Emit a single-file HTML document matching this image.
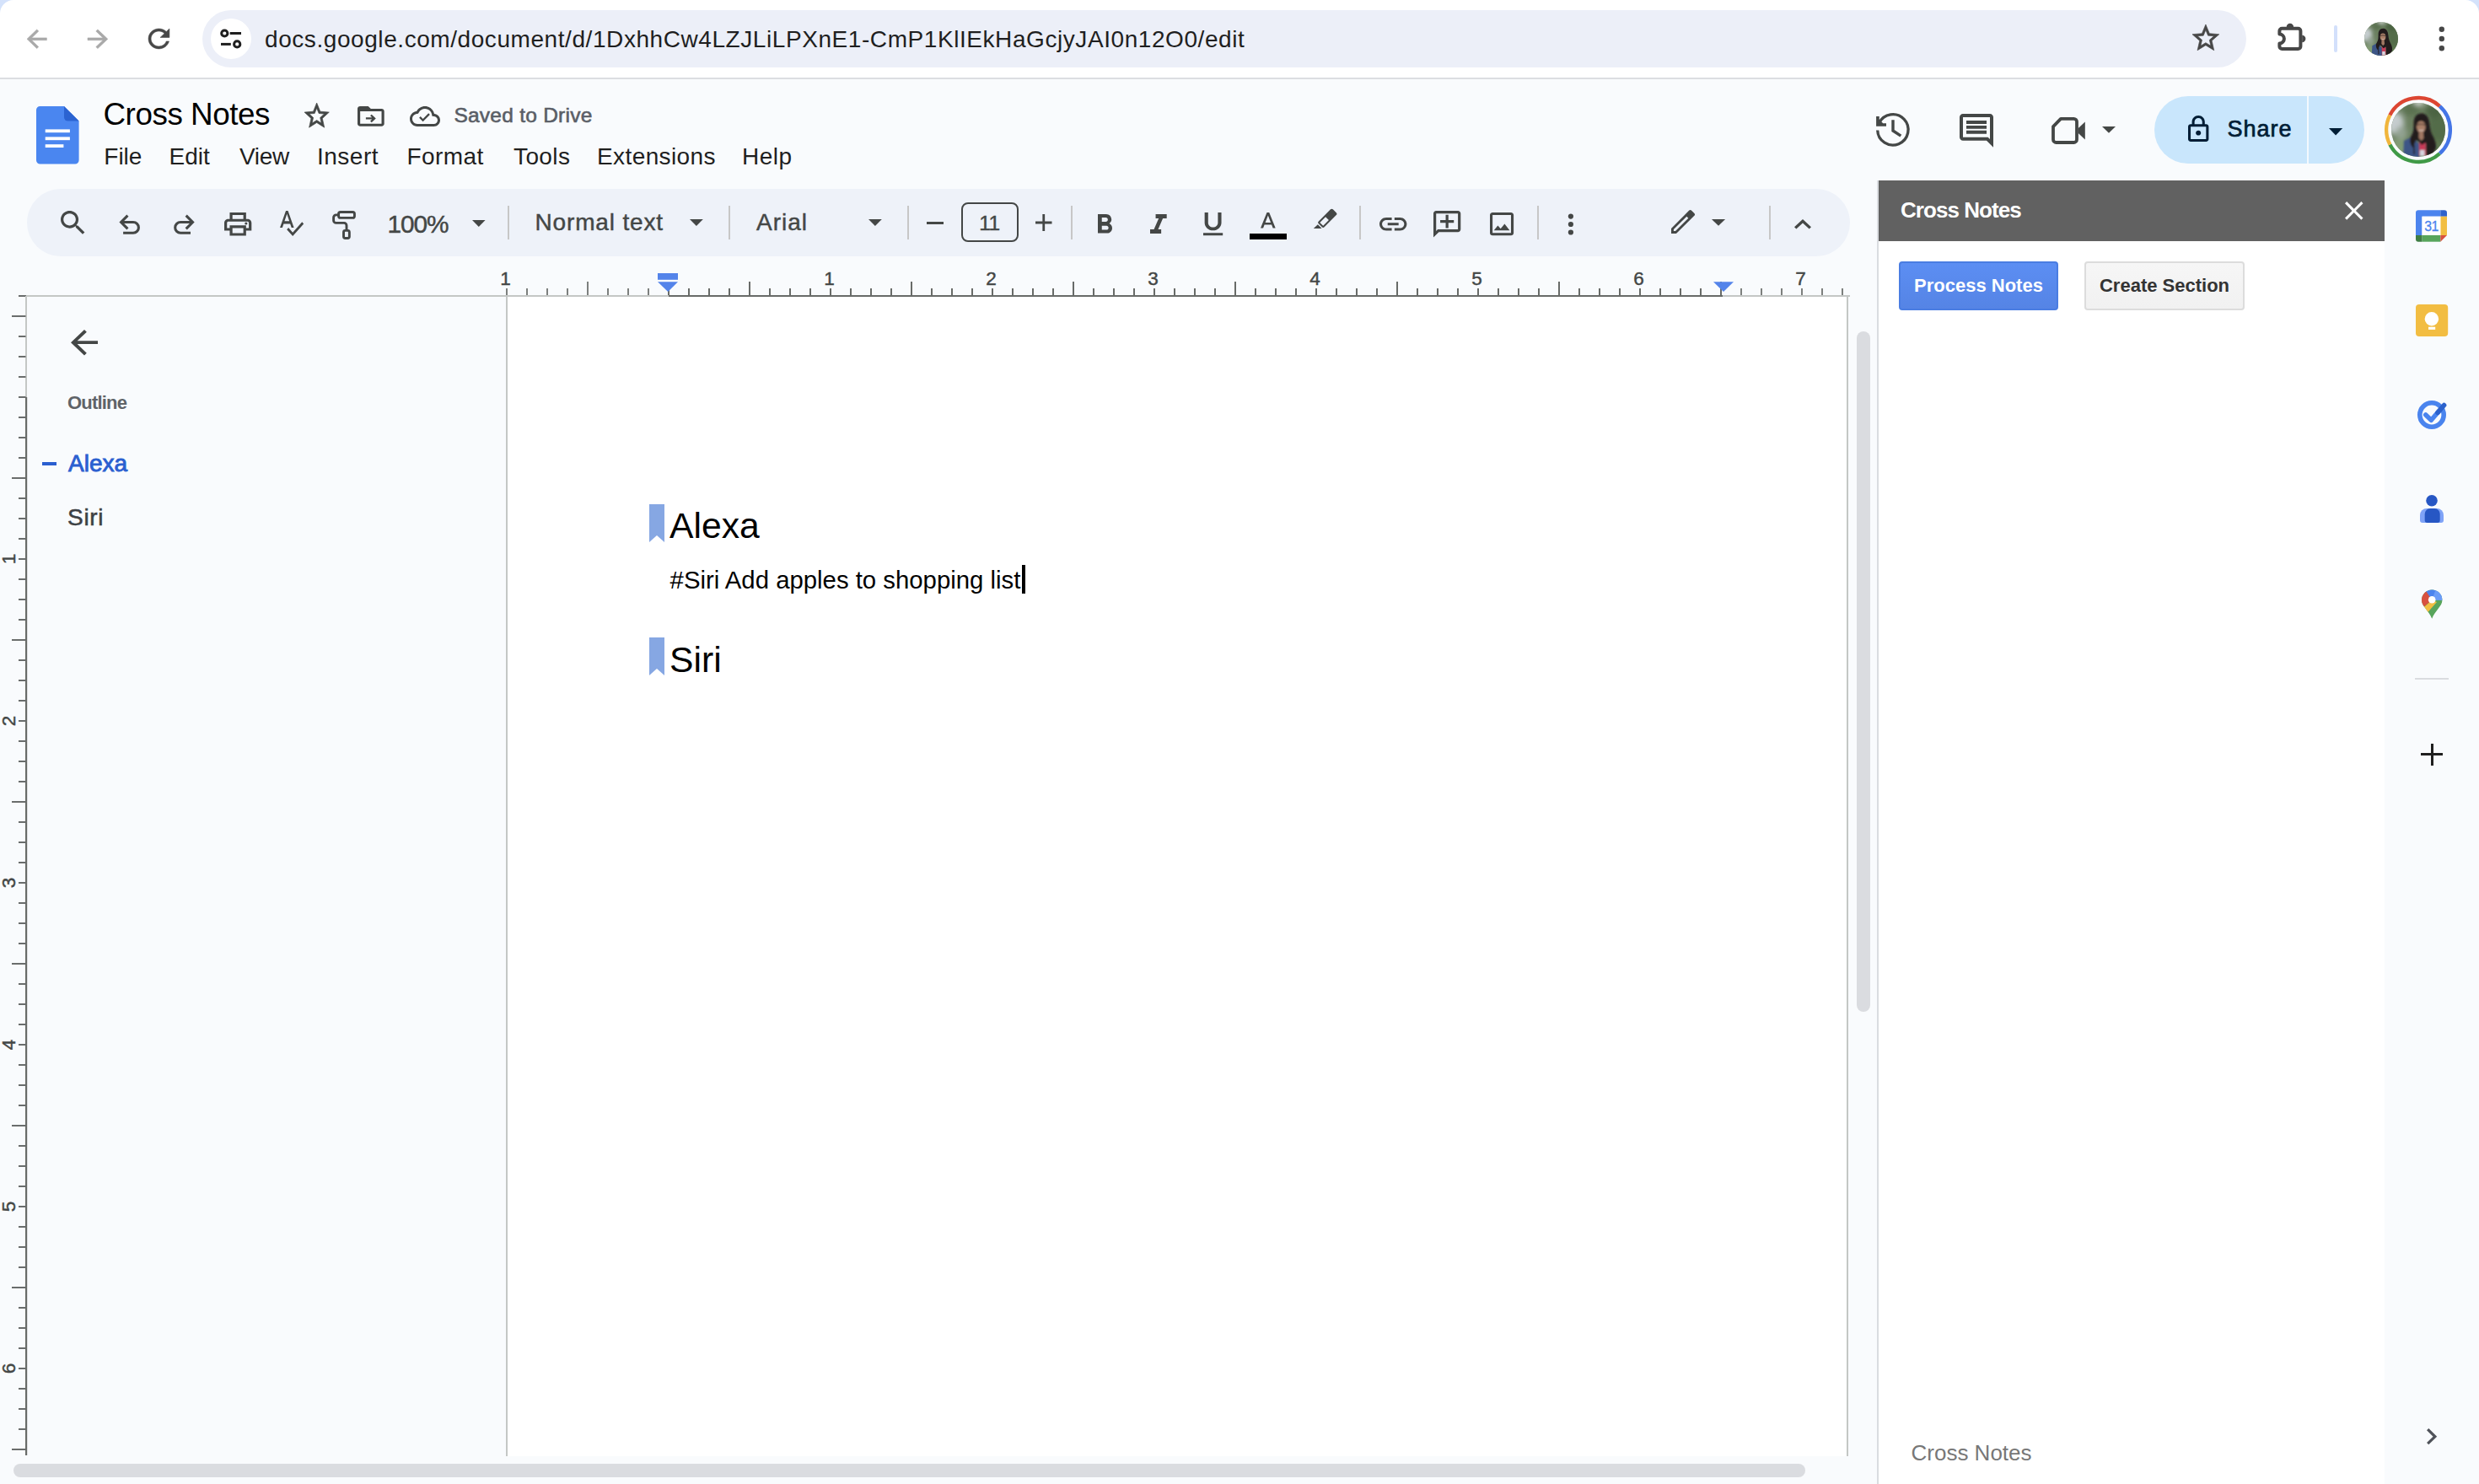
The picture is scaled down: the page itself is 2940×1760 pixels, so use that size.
<!DOCTYPE html>
<html lang="en">
<head>
<meta charset="utf-8">
<title>Cross Notes - Google Docs</title>
<style>
html,body{margin:0;padding:0;}
body{width:2940px;height:1760px;overflow:hidden;background:#f9fbfd;font-family:"Liberation Sans",sans-serif;color:#1f1f1f;position:relative;}
#root{position:absolute;left:0;top:0;width:2940px;height:1760px;overflow:hidden;background:#f9fbfd;}
#root *{box-sizing:border-box;}
@media (max-width:1600px){body{width:1470px;height:880px;}#root{zoom:.5;}}
.abs{position:absolute;}
.ic{position:absolute;display:block;overflow:visible;}
.t{position:absolute;white-space:pre;line-height:1;}
/* chrome */
#corners{position:absolute;left:0;top:0;width:2940px;height:40px;background:#d4e2fb;}
#chrome{position:absolute;left:0;top:0;width:2940px;height:92px;background:#fff;border-radius:16px 16px 0 0;}
#chromeline{position:absolute;left:0;top:92px;width:2940px;height:2px;background:#dcdee1;}
#omni{position:absolute;left:240px;top:12px;width:2424px;height:68px;border-radius:34px;background:#eceff8;}
#siteinfo{position:absolute;left:250px;top:22px;width:48px;height:48px;border-radius:24px;background:#fff;}
#url{left:314px;top:32.5px;font-size:28px;letter-spacing:.57px;color:#1f1f1f;}
#chsep{position:absolute;left:2768px;top:30px;width:4px;height:32px;border-radius:2px;background:#d3e0fb;}
/* docs header */
#title{left:122.5px;top:117.6px;font-size:36.8px;letter-spacing:-.45px;color:#000;}
#saved{left:538.4px;top:124.8px;font-size:24.5px;color:#5a5e66;-webkit-text-stroke:.6px #5a5e66;letter-spacing:.25px}
.menu{top:171.6px;font-size:28px;color:#1f1f1f;}
#share{position:absolute;left:2555px;top:114px;width:249px;height:80px;border-radius:40px;background:#c9e6fc;}
#sharediv{position:absolute;left:2736px;top:114px;width:2px;height:80px;background:#f3f9fe;}
#sharetxt{left:2641.5px;top:140px;font-size:27px;color:#001d35;-webkit-text-stroke:.7px #001d35;letter-spacing:1px}
/* toolbar */
#tb{position:absolute;left:32px;top:224px;width:2162px;height:80px;border-radius:40px;background:#eef2f9;}
.sep{position:absolute;top:244px;width:2px;height:40px;background:#c7c7c7;}
.tbt{top:249.8px;font-size:28px;color:#444746;-webkit-text-stroke:.45px #444746;}
#fsz{position:absolute;left:1140px;top:240px;width:68px;height:47px;border:2px solid #444746;border-radius:8px;}
#abar{position:absolute;left:1482px;top:276.5px;width:44px;height:7.5px;background:#000;}
/* page */
#page{position:absolute;left:602px;top:352px;width:1588px;height:1375px;background:#fff;}
.h2{font-size:42.67px;color:#000;}
.bm{position:absolute;width:18px;height:45px;}
#body1{left:794.6px;top:673px;font-size:29.33px;color:#000;}
#caret{position:absolute;left:1212px;top:670px;width:4px;height:34px;background:#000;}
/* outline */
#outl{left:80px;top:466.5px;font-size:22px;font-weight:bold;color:#5f6368;letter-spacing:-.8px}
#o1{left:81px;top:536px;font-size:28px;color:#2b5fd0;-webkit-text-stroke:.9px #2b5fd0;}
#o2{left:80px;top:600px;font-size:28px;color:#3c4043;-webkit-text-stroke:.5px #3c4043;letter-spacing:.7px}
#odash{position:absolute;left:50px;top:547.5px;width:17px;height:4px;background:#2b5fd0;}
#rul text{stroke:#444746;stroke-width:.45px;}
/* scrollbars */
#vs{position:absolute;left:2202px;top:393px;width:16px;height:807px;border-radius:8px;background:#dadce0;}
#hs{position:absolute;left:16px;top:1736px;width:2125px;height:16px;border-radius:8px;background:#dadce0;}
/* side panel */
#sp{position:absolute;left:2226px;top:214px;width:602px;height:1546px;background:#fff;border-left:2px solid #dadce0;}
#sph{position:absolute;left:2228px;top:214px;width:600px;height:72px;background:#616161;}
#spt{left:2254px;top:236px;font-size:26px;font-weight:bold;color:#fff;letter-spacing:-.95px;}
.btn{position:absolute;top:310px;height:58px;border-radius:4px;font-size:22px;font-weight:bold;line-height:54px;text-align:center;white-space:pre;}
#b1{left:2252px;width:189px;background:linear-gradient(#5c8ef3,#5584e5);border:2px solid #4a7de2;color:#fff;}
#b2{left:2472px;width:190px;background:linear-gradient(#f6f6f6,#f1f1f1);border:2px solid #dcdcdc;color:#333;}
#spf{left:2266.5px;top:1710px;font-size:26px;color:#777;}
#raildiv{position:absolute;left:2864px;top:804.4px;width:40px;height:2px;background:#dadce0;}
</style>
</head>
<body>
<div id="root">
<!-- ===== Chrome toolbar ===== -->
<div id="corners"></div>
<div id="chrome"></div>
<div id="chromeline"></div>
<div id="omni"></div>
<div id="siteinfo"></div>
<svg class="ic" style="left:258px;top:30px;width:32px;height:32px" viewBox="258 30 32 32" fill="none" stroke="#1f1f1f" stroke-width="3">
<circle cx="266.3" cy="39.5" r="3.6"/><line x1="272.7" y1="39.5" x2="286" y2="39.5"/>
<line x1="262" y1="52.4" x2="273.8" y2="52.4"/><circle cx="281.2" cy="52.4" r="3.6"/>
</svg>
<div class="t" id="url">docs.google.com/document/d/1DxhhCw4LZJLiLPXnE1-CmP1KlIEkHaGcjyJAI0n12O0/edit</div>
<div id="chsep"></div>
<svg class="ic" style="left:2804px;top:26px;width:40px;height:40px" viewBox="0 0 64 64">
<defs><clipPath id="cpa"><circle cx="32" cy="32" r="32"/></clipPath><filter id="bla" x="-20%" y="-20%" width="140%" height="140%"><feGaussianBlur stdDeviation="1.1"/></filter><filter id="bba" x="-30%" y="-30%" width="160%" height="160%"><feGaussianBlur stdDeviation="3"/></filter></defs>
<g clip-path="url(#cpa)"><rect width="64" height="64" fill="#6b8060"/>
<g filter="url(#bba)">
<ellipse cx="4" cy="24" rx="11" ry="13" fill="#c5ccce"/><ellipse cx="12" cy="36" rx="7" ry="8" fill="#93a392"/>
<ellipse cx="57" cy="30" rx="13" ry="26" fill="#536c48"/><ellipse cx="50" cy="10" rx="10" ry="8" fill="#4c6442"/>
<ellipse cx="9" cy="54" rx="13" ry="11" fill="#829b74"/><ellipse cx="24" cy="8" rx="10" ry="7" fill="#5a7150"/><ellipse cx="33" cy="-1" rx="6" ry="3.500" fill="#e6ebe8"/>
<ellipse cx="54" cy="52" rx="8" ry="8" fill="#5d774f"/>
</g>
<g filter="url(#bla)">
<path d="M15 45L24 40.500L33.500 49V65H14z" fill="#3c5486"/>
<path d="M33.200 45.500L40.500 46L41 63H33.200z" fill="#c93a58"/><rect x="34" y="56" width="5.500" height="7" fill="#d5d6e0"/>
<path d="M35.800 12.500C29.500 12.500 26.600 17.500 26.600 24C26.600 31 26.500 35 23.500 39.500C21 43.500 22.500 49 24.500 52C26 54.500 27 49 29.500 44L33 46L36 50L41 47C41.500 52 41 58 41.500 63L48 62L52.500 55C54 50 52 44 48.500 38C45.500 32 46 26 44.500 20C43 15 40 12.500 35.800 12.500z" fill="#211b1f"/>
<path d="M27 50C26 54 27.500 57 27 61" stroke="#211b1f" stroke-width="1.600" fill="none"/>
<ellipse cx="35.300" cy="28.500" rx="5.300" ry="6.900" fill="#a97f68"/><path d="M32.800 34H37.800L38.500 42L35.500 45L32.500 41.500z" fill="#a07762"/>
<path d="M30.500 26.500Q35 24 40 26.500" stroke="#3a2a26" stroke-width="1.200" fill="none"/><path d="M33 32.300Q35.500 33.800 38 32.300" stroke="#e9d8cf" stroke-width="1" fill="none"/>
</g></g></svg>
<svg class="ic" style="left:2698px;top:24px;width:40px;height:40px" viewBox="2698 24 40 40">
<path d="M2703.400 40.500V36.800A3 3 0 0 1 2706.400 33.800H2725.400A3 3 0 0 1 2728.400 36.800V55A3 3 0 0 1 2725.400 58H2706.400A3 3 0 0 1 2703.400 55V51.500A5.500 5.500 0 0 0 2703.400 40.500z" fill="none" stroke="#474747" stroke-width="4" stroke-linejoin="round"/>
<path d="M2711.700 32A4.200 4.200 0 0 1 2720.100 32zM2730.200 41.800A4.200 4.200 0 0 1 2730.200 50.200z" fill="#474747"/>
</svg>
<svg class="ic" style="left:2890px;top:30px;width:12px;height:32px" viewBox="0 0 12 32" fill="#474747"><circle cx="5.8" cy="4.7" r="3.2"/><circle cx="5.8" cy="16" r="3.2"/><circle cx="5.8" cy="27.2" r="3.2"/></svg>

<!-- ===== Docs header ===== -->
<svg class="ic" style="left:42.6px;top:125.6px;width:50.6px;height:68.6px" viewBox="0 0 50.6 68.6">
<path d="M4.500 0H33L50.600 17.600V64.100a4.500 4.500 0 0 1-4.500 4.500H4.500A4.500 4.500 0 0 1 0 64.100V4.500A4.500 4.500 0 0 1 4.500 0z" fill="#4a86f0"/>
<path d="M33 0L50.600 17.600H37.500A4.500 4.500 0 0 1 33 13.100z" fill="#2b63d1"/>
<rect x="10.700" y="27.400" width="29.200" height="3.800" fill="#fff"/><rect x="10.700" y="36.400" width="29.200" height="3.800" fill="#fff"/><rect x="10.700" y="45.200" width="21.700" height="3.800" fill="#fff"/>
</svg>
<div class="t" id="title">Cross Notes</div>
<div class="t" id="saved">Saved to Drive</div>
<div class="t menu" style="left:123.3px">File</div>
<div class="t menu" style="left:200.5px">Edit</div>
<div class="t menu" style="left:284px;letter-spacing:-.3px">View</div>
<div class="t menu" style="left:376px;letter-spacing:.5px">Insert</div>
<div class="t menu" style="left:482.6px;letter-spacing:.4px">Format</div>
<div class="t menu" style="left:609px;letter-spacing:.4px">Tools</div>
<div class="t menu" style="left:708px;letter-spacing:.4px">Extensions</div>
<div class="t menu" style="left:880px;letter-spacing:.5px">Help</div>
<div id="share"></div><div id="sharediv"></div>
<div class="t" id="sharetxt">Share</div>
<svg class="ic" style="left:2430px;top:136px;width:46px;height:38px" viewBox="2430 136 46 38">
<path d="M2444 140.850H2459.500A3.500 3.500 0 0 1 2463 144.350V165.500A3.500 3.500 0 0 1 2459.500 169H2438.500A3.500 3.500 0 0 1 2435 165.500V150.100z" fill="none" stroke="#444746" stroke-width="3.800" stroke-linejoin="round"/>
<path d="M2464.800 152.100L2472.800 144.400V165.600L2464.800 158z" fill="#444746"/>
</svg>
<svg class="ic" style="left:2220px;top:130px;width:50px;height:48px" viewBox="2220 130 50 48">
<path d="M2226.70 154.45A18.2 18.2 0 1 0 2228.54 145.87" fill="none" stroke="#444746" stroke-width="3.300"/>
<path d="M2225.100 138.100H2228.750V141.700L2233.200 146.200H2237V149.700H2225.100z" fill="#444746"/>
<path d="M2245 142.200V155L2254.300 161.200" fill="none" stroke="#444746" stroke-width="3.400"/>
</svg>
<svg class="ic" style="left:2826px;top:112px;width:84px;height:84px" viewBox="2826 112 84 84" fill="none" stroke-width="4.300">
<path d="M2893.36 125.83A37.9 37.9 0 0 1 2893.36 182.17" stroke="#4475e6"/>
<path d="M2893.36 182.17A37.9 37.9 0 0 1 2834.38 171.50" stroke="#409a47"/>
<path d="M2834.38 171.50A37.9 37.9 0 0 1 2834.38 136.50" stroke="#f0b53c"/>
<path d="M2834.38 136.50A37.9 37.9 0 0 1 2893.36 125.83" stroke="#dc4632"/>
</svg><svg class="ic" style="left:2836px;top:122px;width:64px;height:64px" viewBox="0 0 64 64">
<defs><clipPath id="cpb"><circle cx="32" cy="32" r="32"/></clipPath><filter id="blb" x="-20%" y="-20%" width="140%" height="140%"><feGaussianBlur stdDeviation="1.1"/></filter><filter id="bbb" x="-30%" y="-30%" width="160%" height="160%"><feGaussianBlur stdDeviation="3"/></filter></defs>
<g clip-path="url(#cpb)"><rect width="64" height="64" fill="#6b8060"/>
<g filter="url(#bbb)">
<ellipse cx="4" cy="24" rx="11" ry="13" fill="#c5ccce"/><ellipse cx="12" cy="36" rx="7" ry="8" fill="#93a392"/>
<ellipse cx="57" cy="30" rx="13" ry="26" fill="#536c48"/><ellipse cx="50" cy="10" rx="10" ry="8" fill="#4c6442"/>
<ellipse cx="9" cy="54" rx="13" ry="11" fill="#829b74"/><ellipse cx="24" cy="8" rx="10" ry="7" fill="#5a7150"/><ellipse cx="33" cy="-1" rx="6" ry="3.500" fill="#e6ebe8"/>
<ellipse cx="54" cy="52" rx="8" ry="8" fill="#5d774f"/>
</g>
<g filter="url(#blb)">
<path d="M15 45L24 40.500L33.500 49V65H14z" fill="#3c5486"/>
<path d="M33.200 45.500L40.500 46L41 63H33.200z" fill="#c93a58"/><rect x="34" y="56" width="5.500" height="7" fill="#d5d6e0"/>
<path d="M35.800 12.500C29.500 12.500 26.600 17.500 26.600 24C26.600 31 26.500 35 23.500 39.500C21 43.500 22.500 49 24.500 52C26 54.500 27 49 29.500 44L33 46L36 50L41 47C41.500 52 41 58 41.500 63L48 62L52.500 55C54 50 52 44 48.500 38C45.500 32 46 26 44.500 20C43 15 40 12.500 35.800 12.500z" fill="#211b1f"/>
<path d="M27 50C26 54 27.500 57 27 61" stroke="#211b1f" stroke-width="1.600" fill="none"/>
<ellipse cx="35.300" cy="28.500" rx="5.300" ry="6.900" fill="#a97f68"/><path d="M32.800 34H37.800L38.500 42L35.500 45L32.500 41.500z" fill="#a07762"/>
<path d="M30.500 26.500Q35 24 40 26.500" stroke="#3a2a26" stroke-width="1.200" fill="none"/><path d="M33 32.300Q35.500 33.800 38 32.300" stroke="#e9d8cf" stroke-width="1" fill="none"/>
</g></g></svg>

<!-- ===== Toolbar ===== -->
<div id="tb"></div>
<div class="sep" style="left:602px"></div>
<div class="sep" style="left:864px"></div>
<div class="sep" style="left:1076px"></div>
<div class="sep" style="left:1270px"></div>
<div class="sep" style="left:1612px"></div>
<div class="sep" style="left:1822.5px"></div>
<div class="sep" style="left:2098px"></div>
<div class="t tbt" style="left:459.5px;top:251px;font-size:29.8px;letter-spacing:-1.1px">100%</div>
<div class="t tbt" style="left:634.5px;letter-spacing:.85px">Normal text</div>
<div class="t tbt" style="left:897px;letter-spacing:1px">Arial</div>
<div id="fsz"></div>
<div class="t tbt" style="left:1159.500px;top:253px;font-size:24.5px;width:28px;text-align:center;letter-spacing:-.5px">11</div>
<div id="abar"></div>
<svg class="ic" style="left:138px;top:250px;width:100px;height:34px" viewBox="138 250 100 34" fill="none" stroke="#444746" stroke-width="3.100">
<path d="M151.400 255.600L143.600 263.500L151.400 271.400M144 263.500H158A6.400 6.400 0 0 1 158 276.300H146.100"/>
<path d="M220.700 255.600L228.500 263.500L220.700 271.400M228.100 263.500H214.100A6.400 6.400 0 0 0 214.100 276.300H226"/>
</svg>
<svg class="ic" style="left:1554px;top:242px;width:36px;height:32px" viewBox="1554 242 36 32" fill="#444746">
<g transform="translate(1574.300 258.800) rotate(-45)"><path fill-rule="evenodd" d="M-10 -4.800H10A2 2 0 0 1 12 -2.800V2.800A2 2 0 0 1 10 4.800H-10A2 2 0 0 1 -12 2.800V-2.800A2 2 0 0 1 -10 -4.800zM-9.950 -2.750V2.750H-.450V-2.750z"/></g>
<path d="M1557.800 270.900H1567.600L1562.900 266.200z"/>
</svg>
<svg class="ic" style="left:1978px;top:244px;width:36px;height:36px" viewBox="1978 244 36 36" fill="#444746">
<path fill-rule="evenodd" d="M1982 277V270.900L2003.300 249.600A1.800 1.800 0 0 1 2005.900 249.600L2009.400 253.100A1.800 1.800 0 0 1 2009.400 255.700L1988 277zM1984.900 274.100V272L2000.300 256.700L2002.300 258.700L1987 274.100z"/>
</svg>
<svg class="ic" style="left:390px;top:246px;width:36px;height:42px" viewBox="390 246 36 42" fill="none" stroke="#444746" stroke-width="2.900" stroke-linejoin="round">
<rect x="401.550" y="251.500" width="18.900" height="6.850" rx="2.200"/>
<path d="M401.550 254.900H398.600A3 3 0 0 0 395.600 257.900V261.400A3 3 0 0 0 398.600 264.400H408A3 3 0 0 1 411 267.400V272.500"/>
<rect x="407.500" y="273.400" width="6.850" height="9.100" rx="2"/>
</svg>
<svg class="ic" style="left:1856px;top:250px;width:14px;height:32px" viewBox="0 0 14 32" fill="#444746"><circle cx="6.9" cy="6.6" r="3.1"/><circle cx="6.9" cy="16" r="3.1"/><circle cx="6.9" cy="25.5" r="3.1"/></svg>

<!-- ===== Rulers & page ===== -->
<div id="page"></div>
<svg class="ic" style="left:0;top:300px;width:2230px;height:1460px" viewBox="0 300 2230 1460" font-family="Liberation Sans, sans-serif" font-size="22.5" fill="#444746" id="rul">
<!-- horizontal ruler base line -->
<rect x="22" y="350" width="9" height="2" fill="#6a6d6c"/>
<rect x="31" y="350" width="762" height="2" fill="#c4c7c5"/>
<rect x="793" y="350" width="1251" height="2" fill="#686b68"/>
<rect x="2043" y="350" width="151" height="2" fill="#c4c7c5"/>
<!-- page edges -->
<rect x="600" y="343" width="2" height="1384" fill="#c4c7c5"/>
<rect x="2190" y="350" width="2" height="1377" fill="#c4c7c5"/>
<!-- vertical ruler line -->
<rect x="30" y="351" width="2" height="120" fill="#c4c7c5"/>
<rect x="30" y="471" width="2.200" height="1255" fill="#686b68"/>
<rect x="600" y="342" width="2" height="8" fill="#7d807e"/>
<text x="599.5" y="337.8" text-anchor="middle">1</text>
<rect x="624" y="342" width="2" height="8" fill="#7d807e"/>
<rect x="648" y="342" width="2" height="8" fill="#7d807e"/>
<rect x="672" y="342" width="2" height="8" fill="#7d807e"/>
<rect x="696" y="334" width="2" height="16" fill="#7d807e"/>
<rect x="720" y="342" width="2" height="8" fill="#7d807e"/>
<rect x="744" y="342" width="2" height="8" fill="#7d807e"/>
<rect x="768" y="342" width="2" height="8" fill="#7d807e"/>
<rect x="792" y="342" width="2" height="8" fill="#686b68"/>
<rect x="816" y="342" width="2" height="8" fill="#686b68"/>
<rect x="840" y="342" width="2" height="8" fill="#686b68"/>
<rect x="864" y="342" width="2" height="8" fill="#686b68"/>
<rect x="888" y="334" width="2" height="16" fill="#686b68"/>
<rect x="912" y="342" width="2" height="8" fill="#686b68"/>
<rect x="936" y="342" width="2" height="8" fill="#686b68"/>
<rect x="960" y="342" width="2" height="8" fill="#686b68"/>
<rect x="984" y="342" width="2" height="8" fill="#686b68"/>
<text x="983.5" y="337.8" text-anchor="middle">1</text>
<rect x="1008" y="342" width="2" height="8" fill="#686b68"/>
<rect x="1032" y="342" width="2" height="8" fill="#686b68"/>
<rect x="1056" y="342" width="2" height="8" fill="#686b68"/>
<rect x="1080" y="334" width="2" height="16" fill="#686b68"/>
<rect x="1104" y="342" width="2" height="8" fill="#686b68"/>
<rect x="1128" y="342" width="2" height="8" fill="#686b68"/>
<rect x="1152" y="342" width="2" height="8" fill="#686b68"/>
<rect x="1176" y="342" width="2" height="8" fill="#686b68"/>
<text x="1175.5" y="337.8" text-anchor="middle">2</text>
<rect x="1200" y="342" width="2" height="8" fill="#686b68"/>
<rect x="1224" y="342" width="2" height="8" fill="#686b68"/>
<rect x="1248" y="342" width="2" height="8" fill="#686b68"/>
<rect x="1272" y="334" width="2" height="16" fill="#686b68"/>
<rect x="1296" y="342" width="2" height="8" fill="#686b68"/>
<rect x="1320" y="342" width="2" height="8" fill="#686b68"/>
<rect x="1344" y="342" width="2" height="8" fill="#686b68"/>
<rect x="1368" y="342" width="2" height="8" fill="#686b68"/>
<text x="1367.5" y="337.8" text-anchor="middle">3</text>
<rect x="1392" y="342" width="2" height="8" fill="#686b68"/>
<rect x="1416" y="342" width="2" height="8" fill="#686b68"/>
<rect x="1440" y="342" width="2" height="8" fill="#686b68"/>
<rect x="1464" y="334" width="2" height="16" fill="#686b68"/>
<rect x="1488" y="342" width="2" height="8" fill="#686b68"/>
<rect x="1512" y="342" width="2" height="8" fill="#686b68"/>
<rect x="1536" y="342" width="2" height="8" fill="#686b68"/>
<rect x="1560" y="342" width="2" height="8" fill="#686b68"/>
<text x="1559.5" y="337.8" text-anchor="middle">4</text>
<rect x="1584" y="342" width="2" height="8" fill="#686b68"/>
<rect x="1608" y="342" width="2" height="8" fill="#686b68"/>
<rect x="1632" y="342" width="2" height="8" fill="#686b68"/>
<rect x="1656" y="334" width="2" height="16" fill="#686b68"/>
<rect x="1680" y="342" width="2" height="8" fill="#686b68"/>
<rect x="1704" y="342" width="2" height="8" fill="#686b68"/>
<rect x="1728" y="342" width="2" height="8" fill="#686b68"/>
<rect x="1752" y="342" width="2" height="8" fill="#686b68"/>
<text x="1751.5" y="337.8" text-anchor="middle">5</text>
<rect x="1776" y="342" width="2" height="8" fill="#686b68"/>
<rect x="1800" y="342" width="2" height="8" fill="#686b68"/>
<rect x="1824" y="342" width="2" height="8" fill="#686b68"/>
<rect x="1848" y="334" width="2" height="16" fill="#686b68"/>
<rect x="1872" y="342" width="2" height="8" fill="#686b68"/>
<rect x="1896" y="342" width="2" height="8" fill="#686b68"/>
<rect x="1920" y="342" width="2" height="8" fill="#686b68"/>
<rect x="1944" y="342" width="2" height="8" fill="#686b68"/>
<text x="1943.5" y="337.8" text-anchor="middle">6</text>
<rect x="1968" y="342" width="2" height="8" fill="#686b68"/>
<rect x="1992" y="342" width="2" height="8" fill="#686b68"/>
<rect x="2016" y="342" width="2" height="8" fill="#686b68"/>
<rect x="2040" y="334" width="2" height="16" fill="#686b68"/>
<rect x="2064" y="342" width="2" height="8" fill="#7d807e"/>
<rect x="2088" y="342" width="2" height="8" fill="#7d807e"/>
<rect x="2112" y="342" width="2" height="8" fill="#7d807e"/>
<rect x="2136" y="342" width="2" height="8" fill="#7d807e"/>
<text x="2135.5" y="337.8" text-anchor="middle">7</text>
<rect x="2160" y="342" width="2" height="8" fill="#7d807e"/>
<rect x="2184" y="342" width="2" height="8" fill="#7d807e"/>
<rect x="14" y="374" width="16.500" height="2" fill="#6a6d6c"/>
<rect x="22" y="398" width="8.500" height="2" fill="#6a6d6c"/>
<rect x="22" y="422" width="8.500" height="2" fill="#6a6d6c"/>
<rect x="22" y="446" width="8.500" height="2" fill="#6a6d6c"/>
<rect x="22" y="470" width="8.500" height="2" fill="#6a6d6c"/>
<rect x="22" y="494" width="8.500" height="2" fill="#6a6d6c"/>
<rect x="22" y="518" width="8.500" height="2" fill="#6a6d6c"/>
<rect x="22" y="542" width="8.500" height="2" fill="#6a6d6c"/>
<rect x="14" y="566" width="16.500" height="2" fill="#6a6d6c"/>
<rect x="22" y="590" width="8.500" height="2" fill="#6a6d6c"/>
<rect x="22" y="614" width="8.500" height="2" fill="#6a6d6c"/>
<rect x="22" y="638" width="8.500" height="2" fill="#6a6d6c"/>
<rect x="22" y="662" width="8.500" height="2" fill="#6a6d6c"/>
<text transform="translate(18.2 663) rotate(-90)" text-anchor="middle">1</text>
<rect x="22" y="686" width="8.500" height="2" fill="#6a6d6c"/>
<rect x="22" y="710" width="8.500" height="2" fill="#6a6d6c"/>
<rect x="22" y="734" width="8.500" height="2" fill="#6a6d6c"/>
<rect x="14" y="758" width="16.500" height="2" fill="#6a6d6c"/>
<rect x="22" y="782" width="8.500" height="2" fill="#6a6d6c"/>
<rect x="22" y="806" width="8.500" height="2" fill="#6a6d6c"/>
<rect x="22" y="830" width="8.500" height="2" fill="#6a6d6c"/>
<rect x="22" y="854" width="8.500" height="2" fill="#6a6d6c"/>
<text transform="translate(18.2 855) rotate(-90)" text-anchor="middle">2</text>
<rect x="22" y="878" width="8.500" height="2" fill="#6a6d6c"/>
<rect x="22" y="902" width="8.500" height="2" fill="#6a6d6c"/>
<rect x="22" y="926" width="8.500" height="2" fill="#6a6d6c"/>
<rect x="14" y="950" width="16.500" height="2" fill="#6a6d6c"/>
<rect x="22" y="974" width="8.500" height="2" fill="#6a6d6c"/>
<rect x="22" y="998" width="8.500" height="2" fill="#6a6d6c"/>
<rect x="22" y="1022" width="8.500" height="2" fill="#6a6d6c"/>
<rect x="22" y="1046" width="8.500" height="2" fill="#6a6d6c"/>
<text transform="translate(18.2 1047) rotate(-90)" text-anchor="middle">3</text>
<rect x="22" y="1070" width="8.500" height="2" fill="#6a6d6c"/>
<rect x="22" y="1094" width="8.500" height="2" fill="#6a6d6c"/>
<rect x="22" y="1118" width="8.500" height="2" fill="#6a6d6c"/>
<rect x="14" y="1142" width="16.500" height="2" fill="#6a6d6c"/>
<rect x="22" y="1166" width="8.500" height="2" fill="#6a6d6c"/>
<rect x="22" y="1190" width="8.500" height="2" fill="#6a6d6c"/>
<rect x="22" y="1214" width="8.500" height="2" fill="#6a6d6c"/>
<rect x="22" y="1238" width="8.500" height="2" fill="#6a6d6c"/>
<text transform="translate(18.2 1239) rotate(-90)" text-anchor="middle">4</text>
<rect x="22" y="1262" width="8.500" height="2" fill="#6a6d6c"/>
<rect x="22" y="1286" width="8.500" height="2" fill="#6a6d6c"/>
<rect x="22" y="1310" width="8.500" height="2" fill="#6a6d6c"/>
<rect x="14" y="1334" width="16.500" height="2" fill="#6a6d6c"/>
<rect x="22" y="1358" width="8.500" height="2" fill="#6a6d6c"/>
<rect x="22" y="1382" width="8.500" height="2" fill="#6a6d6c"/>
<rect x="22" y="1406" width="8.500" height="2" fill="#6a6d6c"/>
<rect x="22" y="1430" width="8.500" height="2" fill="#6a6d6c"/>
<text transform="translate(18.2 1431) rotate(-90)" text-anchor="middle">5</text>
<rect x="22" y="1454" width="8.500" height="2" fill="#6a6d6c"/>
<rect x="22" y="1478" width="8.500" height="2" fill="#6a6d6c"/>
<rect x="22" y="1502" width="8.500" height="2" fill="#6a6d6c"/>
<rect x="14" y="1526" width="16.500" height="2" fill="#6a6d6c"/>
<rect x="22" y="1550" width="8.500" height="2" fill="#6a6d6c"/>
<rect x="22" y="1574" width="8.500" height="2" fill="#6a6d6c"/>
<rect x="22" y="1598" width="8.500" height="2" fill="#6a6d6c"/>
<rect x="22" y="1622" width="8.500" height="2" fill="#6a6d6c"/>
<text transform="translate(18.2 1623) rotate(-90)" text-anchor="middle">6</text>
<rect x="22" y="1646" width="8.500" height="2" fill="#6a6d6c"/>
<rect x="22" y="1670" width="8.500" height="2" fill="#6a6d6c"/>
<rect x="22" y="1694" width="8.500" height="2" fill="#6a6d6c"/>
<rect x="14" y="1718" width="16.500" height="2" fill="#6a6d6c"/>
<!-- indent markers -->
<rect x="780" y="324" width="24" height="7.800" fill="#5484ea"/>
<path d="M780 334.200h24l-11.800 11.900z" fill="#5484ea"/>
<path d="M2032 334.200h24l-12 11.800z" fill="#5484ea"/>
</svg>

<!-- ===== Outline ===== -->
<div class="t" id="outl">Outline</div>
<div id="odash"></div>
<div class="t" id="o1">Alexa</div>
<div class="t" id="o2">Siri</div>

<!-- ===== Document content ===== -->
<svg class="bm" style="left:770px;top:598px" viewBox="0 0 18 45"><path d="M0 0h18v45l-9-8-9 8z" fill="#86a7e3"/></svg>
<div class="t h2" style="left:794px;top:601.7px">Alexa</div>
<div class="t" id="body1">#Siri Add apples to shopping list</div>
<div id="caret"></div>
<svg class="bm" style="left:770px;top:756px" viewBox="0 0 18 45"><path d="M0 0h18v45l-9-8-9 8z" fill="#86a7e3"/></svg>
<div class="t h2" style="left:794px;top:760.5px">Siri</div>

<div id="vs"></div>
<div id="hs"></div>

<!-- ===== Side panel ===== -->
<div id="sp"></div>
<div id="sph"></div>
<div class="t" id="spt">Cross Notes</div>
<div class="btn" id="b1">Process Notes</div>
<div class="btn" id="b2">Create Section</div>
<div class="t" id="spf">Cross Notes</div>

<!-- ===== Right rail ===== -->
<svg class="ic" style="left:2860px;top:240px;width:50px;height:500px" viewBox="2860 240 50 500">
<!-- calendar -->
<g transform="translate(2865 249.200)">
<path d="M3 0H29.300V7.500H7.500V29.800H0V3A3 3 0 0 1 3 0z" fill="#4c84ee"/>
<path d="M29.300 0H34A3 3 0 0 1 37 3V7.500H29.300z" fill="#2f62cc"/>
<rect x="29.300" y="7.500" width="7.700" height="22.300" fill="#f2be42"/>
<rect x="7.500" y="29.800" width="21.800" height="7.700" fill="#58a55c"/>
<path d="M0 29.800H7.500V37.500H3A3 3 0 0 1 0 34.500z" fill="#3f7d44"/>
<path d="M29.300 29.800H37L29.300 37.500z" fill="#d85140"/>
<rect x="7.500" y="7.500" width="21.800" height="22.300" fill="#fff"/>
<text x="18.400" y="24.600" text-anchor="middle" font-family="Liberation Sans, sans-serif" font-size="15.800" fill="#4c84ee" stroke="#4c84ee" stroke-width=".3" letter-spacing="-.7">31</text>
</g>
<!-- keep -->
<rect x="2865" y="361" width="38.200" height="38" rx="4" fill="#f2bd42"/>
<circle cx="2883.900" cy="378.300" r="8.200" fill="#fff"/><rect x="2880" y="387.700" width="8.200" height="3.200" fill="#fff"/>
<!-- tasks -->
<circle cx="2884" cy="492" r="14.200" fill="none" stroke="#4a84ee" stroke-width="5.600"/>
<path d="M2876.800 492L2883.300 498.300L2892.500 487.500" fill="none" stroke="#4a84ee" stroke-width="5.600" stroke-linecap="round" stroke-linejoin="round"/>
<path d="M2891 489.300L2898.600 480.500" fill="none" stroke="#2c62cc" stroke-width="5.600" stroke-linecap="round"/>
<!-- contacts -->
<path d="M2870 617V611A8 8 0 0 1 2878 603H2890A8 8 0 0 1 2898 611V617A3 3 0 0 1 2895 620H2873A3 3 0 0 1 2870 617z" fill="#7fa3f7"/>
<path d="M2875.700 617V609.500A6.500 6.500 0 0 1 2882.200 603H2887.200A6.500 6.500 0 0 1 2893.700 609.500V617A3 3 0 0 1 2890.700 620H2878.700A3 3 0 0 1 2875.700 617z" fill="#2757c4"/>
<circle cx="2884" cy="593.700" r="6.800" fill="#2757c4"/>
<!-- maps -->
<defs><clipPath id="pin"><path d="M2884.200 699.500A12.200 12.200 0 0 1 2896.400 711.700C2896.400 719 2888 724 2884.200 733.700C2880.400 724 2872 719 2872 711.700A12.200 12.200 0 0 1 2884.200 699.500z"/></clipPath></defs>
<g clip-path="url(#pin)">
<rect x="2870" y="698" width="30" height="38" fill="#58a55c"/>
<path d="M2870 698H2900V706L2884.200 711.700L2876 702z" fill="#4c84ee"/>
<path d="M2889 698H2900V712L2884.200 711.700z" fill="#6b9cf7"/>
<path d="M2870 698L2877.500 701.500L2884.200 711.700L2872 722H2870z" fill="#d85140"/>
<path d="M2884.200 711.700L2872.500 722L2878 727.500L2890 714z" fill="#f2be42"/>
</g>
<circle cx="2884.200" cy="711.200" r="4.300" fill="#fff"/>
</svg>
<div id="raildiv"></div>
<div class="abs" style="left:2870.7px;top:893.3px;width:26.8px;height:3.1px;background:#1f1f1f"></div><div class="abs" style="left:2882.5px;top:881.7px;width:3.1px;height:26.3px;background:#1f1f1f"></div>

<svg class="ic" style="left:32.3px;top:34.7px;width:23.4px;height:22.6px;color:#a9a9a9" viewBox="4 4 16 16" preserveAspectRatio="none" fill="currentColor" stroke="currentColor" stroke-width="0.4"><path d="M20 11H7.83l5.59-5.59L12 4l-8 8 8 8 1.41-1.41L7.83 13H20v-2z"/></svg>
<svg class="ic" style="left:103.9px;top:34.7px;width:23.8px;height:22.6px;color:#a9a9a9" viewBox="4 4 16 16" preserveAspectRatio="none" fill="currentColor" stroke="currentColor" stroke-width="0.4"><path d="M12 4l-1.41 1.41L16.17 11H4v2h12.17l-5.58 5.59L12 20l8-8z"/></svg>
<svg class="ic" style="left:175.8px;top:33.8px;width:24.9px;height:23.9px;color:#474747" viewBox="4.01 4 15.99 16" preserveAspectRatio="none" fill="currentColor" stroke="currentColor" stroke-width="0.35"><path d="M17.65 6.35C16.2 4.9 14.21 4 12 4c-4.42 0-7.99 3.58-7.99 8s3.57 8 7.99 8c3.73 0 6.84-2.55 7.73-6h-2.08c-.82 2.33-3.04 4-5.65 4-3.31 0-6-2.69-6-6s2.690-6 6-6c1.660 0 3.140.690 4.220 1.780L13 11h7V4l-2.350 2.350z"/></svg>
<svg class="ic" style="left:2599.8px;top:29.4px;width:31.8px;height:30.7px;color:#474747" viewBox="2 2 20 19" preserveAspectRatio="none" fill="currentColor" stroke="currentColor" stroke-width="0.4"><path d="M22 9.24l-7.19-.62L12 2 9.19 8.63 2 9.24l5.46 4.73L5.82 21 12 17.27 18.18 21l-1.63-7.03L22 9.24zM12 15.4l-3.76 2.27 1-4.28-3.32-2.88 4.38-.38L12 6.1l1.71 4.04 4.38.38-3.32 2.88 1 4.28L12 15.4z"/></svg>
<svg class="ic" style="left:361.3px;top:122.4px;width:29.3px;height:29.2px;color:#444746" viewBox="2 2 20 19" preserveAspectRatio="none" fill="currentColor" stroke="currentColor" stroke-width="0.45"><path d="M22 9.24l-7.19-.62L12 2 9.19 8.63 2 9.24l5.46 4.73L5.82 21 12 17.27 18.18 21l-1.63-7.03L22 9.24zM12 15.4l-3.76 2.27 1-4.28-3.32-2.88 4.38-.38L12 6.1l1.71 4.04 4.38.38-3.32 2.88 1 4.28L12 15.4z"/></svg>
<svg class="ic" style="left:424px;top:126px;width:31.7px;height:23.8px;color:#444746" viewBox="2 4 20 16" preserveAspectRatio="none" fill="currentColor"><path d="M20 6h-8l-2-2H4c-1.100 0-2 .9-2 2v12c0 1.100.9 2 2 2h16c1.100 0 2-.9 2-2V8c0-1.100-.9-2-2-2zm0 12H4V8h16v10zM12.55 10.5L15.75 13.7l-3.2 3.2-1.060-1.060 1.390-1.390H8.250v-1.500h4.630l-1.390-1.390z"/></svg>
<svg class="ic" style="left:486.1px;top:125.9px;width:36px;height:23.9px;color:#444746" viewBox="0 4 24 16" preserveAspectRatio="none" fill="currentColor"><path d="M19.35 10.04C18.67 6.59 15.64 4 12 4 9.11 4 6.6 5.64 5.35 8.04 2.34 8.36 0 10.91 0 14c0 3.31 2.69 6 6 6h13c2.760 0 5-2.240 5-5 0-2.640-2.050-4.780-4.650-4.960zM19 18H6c-2.210 0-4-1.790-4-4 0-2.050 1.530-3.760 3.560-3.970l1.070-.110.5-.950C8.080 7.140 9.940 6 12 6c2.620 0 4.880 1.860 5.390 4.430l.3 1.500 1.530.110c1.560.100 2.780 1.410 2.780 2.960 0 1.650-1.350 3-3 3zM10.400 14L8.500 12.100 7.400 13.200l3 3 5.500-5.500-1.100-1.100z"/></svg>
<svg class="ic" style="left:2324px;top:134.8px;width:40px;height:39.7px;color:#444746" viewBox="2 2 20 20" preserveAspectRatio="none" fill="currentColor"><path d="M4 2h16c1.100 0 2 .9 2 2v18l-4-4H4c-1.100 0-2-.9-2-2V4c0-1.100.9-2 2-2zm0 14h14.830L20 17.170V4H4v12zM6 12h12v2H6zm0-3h12v2H6zm0-3h12v2H6z"/></svg>
<svg class="ic" style="left:2493px;top:149.7px;width:16px;height:7.8px;color:#444746" viewBox="7 10 10 5" preserveAspectRatio="none" fill="currentColor"><path d="M7 10l5 5 5-5z"/></svg>
<svg class="ic" style="left:2594.6px;top:137px;width:24.4px;height:31px;color:#001d35" viewBox="4 1 16 21" preserveAspectRatio="none" fill="currentColor"><path d="M18 8h-1V6c0-2.760-2.240-5-5-5S7 3.240 7 6v2H6c-1.100 0-2 .9-2 2v10c0 1.100.9 2 2 2h12c1.100 0 2-.9 2-2V10c0-1.100-.9-2-2-2zM9 6c0-1.660 1.340-3 3-3s3 1.340 3 3v2H9V6zm9 14H6V10h12v10zm-6-3c1.100 0 2-.9 2-2s-.9-2-2-2-2 .9-2 2 .9 2 2 2z"/></svg>
<svg class="ic" style="left:2761.8px;top:151.8px;width:16.2px;height:8.6px;color:#001d35" viewBox="7 10 10 5" preserveAspectRatio="none" fill="currentColor"><path d="M7 10l5 5 5-5z"/></svg>
<svg class="ic" style="left:71.6px;top:250px;width:28.4px;height:27.8px;color:#444746" viewBox="3 3 17.49 17.49" preserveAspectRatio="none" fill="currentColor"><path d="M15.5 14h-.79l-.28-.27C15.41 12.59 16 11.11 16 9.5 16 5.91 13.09 3 9.5 3S3 5.91 3 9.5 5.91 16 9.5 16c1.610 0 3.090-.590 4.230-1.570l.27.28v.79l5 4.990L20.490 19l-4.990-5zm-6 0C7.010 14 5 11.990 5 9.500S7.010 5 9.500 5 14 7.010 14 9.500 11.990 14 9.500 14z"/></svg>
<svg class="ic" style="left:265.7px;top:252.4px;width:32.3px;height:27.6px;color:#444746" viewBox="2 3 20 18" preserveAspectRatio="none" fill="currentColor"><path d="M19 8h-1V3H6v5H5c-1.660 0-3 1.340-3 3v6h4v4h12v-4h4v-6c0-1.660-1.340-3-3-3zM8 5h8v3H8V5zm8 14H8v-4h8v4zm2-4v-2H6v2H4v-4c0-.550.450-1 1-1h14c.550 0 1 .450 1 1v4h-2z"/><circle cx="18" cy="11.500" r="1"/></svg>
<svg class="ic" style="left:331.8px;top:250px;width:28.2px;height:30px;color:#444746" viewBox="2.46 3 20.54 19.5" preserveAspectRatio="none" fill="currentColor"><path d="M12.45 16h2.09L9.43 3H7.57L2.46 16h2.090l1.120-3h5.640l1.140 3zm-6.020-5L8.500 5.480 10.570 11H6.430zm15.160.590l-8.090 8.090L9.830 16l-1.410 1.410 5.090 5.090L23 13l-1.410-1.410z"/></svg>
<svg class="ic" style="left:560.4px;top:260.8px;width:15.6px;height:8px;color:#444746" viewBox="7 10 10 5" preserveAspectRatio="none" fill="currentColor"><path d="M7 10l5 5 5-5z"/></svg>
<svg class="ic" style="left:818px;top:260px;width:15.8px;height:8px;color:#444746" viewBox="7 10 10 5" preserveAspectRatio="none" fill="currentColor"><path d="M7 10l5 5 5-5z"/></svg>
<svg class="ic" style="left:1029.8px;top:260px;width:15.8px;height:8px;color:#444746" viewBox="7 10 10 5" preserveAspectRatio="none" fill="currentColor"><path d="M7 10l5 5 5-5z"/></svg>
<svg class="ic" style="left:1099px;top:262.5px;width:20px;height:3px;color:#444746" viewBox="5 11 14 2" preserveAspectRatio="none" fill="currentColor"><path d="M19 13H5v-2h14v2z"/></svg>
<svg class="ic" style="left:1227.5px;top:254px;width:19.5px;height:20px;color:#444746" viewBox="5 5 14 14" preserveAspectRatio="none" fill="currentColor"><path d="M19 13h-6v6h-2v-6H5v-2h6V5h2v6h6v2z"/></svg>
<svg class="ic" style="left:1301.5px;top:253.8px;width:17px;height:22.6px;color:#444746" viewBox="7 4 10.75 14" preserveAspectRatio="none" fill="currentColor"><path d="M15.6 10.79c.97-.67 1.65-1.77 1.65-2.79 0-2.26-1.75-4-4-4H7v14h7.040c2.090 0 3.710-1.700 3.710-3.790 0-1.520-.860-2.820-2.150-3.420zM10 6.500h3c.830 0 1.500.670 1.500 1.500s-.670 1.500-1.500 1.500h-3v-3zm3.500 9H10v-3h3.500c.830 0 1.500.670 1.500 1.500s-.670 1.500-1.500 1.500z"/></svg>
<svg class="ic" style="left:1364px;top:254px;width:19.7px;height:23px;color:#444746" viewBox="6 4 12 14" preserveAspectRatio="none" fill="currentColor"><path d="M10 4v3h2.210l-3.420 8H6v3h8v-3h-2.210l3.420-8H18V4z"/></svg>
<svg class="ic" style="left:1426.6px;top:252.4px;width:23.2px;height:27.3px;color:#444746" viewBox="5 3 14 18" preserveAspectRatio="none" fill="currentColor"><path d="M12 17c3.310 0 6-2.690 6-6V3h-2.500v8c0 1.930-1.570 3.500-3.500 3.500S8.500 12.930 8.500 11V3H6v8c0 3.310 2.690 6 6 6zm-7 2v2h14v-2H5z"/></svg>
<svg class="ic" style="left:1495px;top:251.5px;width:17.7px;height:18.5px;color:#444746" viewBox="5.5 3 12.99 14" preserveAspectRatio="none" fill="currentColor"><path d="M11 3L5.500 17h2.250l1.120-3h6.250l1.120 3h2.250L13 3h-2zm-1.380 9L12 5.670 14.380 12H9.620z"/></svg>
<svg class="ic" style="left:1635.6px;top:258px;width:32.4px;height:15.5px;color:#444746" viewBox="2 7 20 10" preserveAspectRatio="none" fill="currentColor"><path d="M3.900 12c0-1.710 1.390-3.100 3.100-3.100h4V7H7c-2.760 0-5 2.240-5 5s2.240 5 5 5h4v-1.900H7c-1.710 0-3.100-1.390-3.100-3.100zM8 13h8v-2H8v2zm9-6h-4v1.900h4c1.710 0 3.100 1.390 3.100 3.100s-1.390 3.100-3.100 3.100h-4V17h4c2.760 0 5-2.240 5-5s-2.240-5-5-5z"/></svg>
<svg class="ic" style="left:1699.7px;top:250.4px;width:32.3px;height:31.6px;color:#444746" viewBox="2 2 20 20" preserveAspectRatio="none" fill="currentColor"><path d="M20 2H4c-1.100 0-2 .9-2 2v18l4-4h14c1.100 0 2-.9 2-2V4c0-1.100-.9-2-2-2zm0 14H5.170L4 17.170V4h16v12zM13 5h-2v4H7v2h4v4h2v-4h4V9h-4z"/></svg>
<svg class="ic" style="left:1766.9px;top:252.4px;width:28.1px;height:27.3px;color:#444746" viewBox="3 3 18 18" preserveAspectRatio="none" fill="currentColor"><path d="M19 5v14H5V5h14m0-2H5c-1.100 0-2 .9-2 2v14c0 1.100.9 2 2 2h14c1.100 0 2-.9 2-2V5c0-1.100-.9-2-2-2zm-4.860 8.860l-3 3.870L9 13.140 6 17h12l-3.860-5.140z"/></svg>
<svg class="ic" style="left:2029.9px;top:260px;width:16.1px;height:7.8px;color:#444746" viewBox="7 10 10 5" preserveAspectRatio="none" fill="currentColor"><path d="M7 10l5 5 5-5z"/></svg>
<svg class="ic" style="left:2128px;top:260.3px;width:20px;height:11.5px;color:#444746" viewBox="6 8 12 7.41" preserveAspectRatio="none" fill="currentColor"><path d="M7.410 15.410L12 10.830l4.590 4.580L18 14l-6-6-6 6z"/></svg>
<svg class="ic" style="left:84px;top:390.9px;width:32px;height:30.4px;color:#444746" viewBox="4 4 16 16" preserveAspectRatio="none" fill="currentColor"><path d="M20 11H7.83l5.59-5.59L12 4l-8 8 8 8 1.41-1.41L7.83 13H20v-2z"/></svg>
<svg class="ic" style="left:2781px;top:239px;width:21.5px;height:21.75px;color:#ffffff" viewBox="5 5 14 14" preserveAspectRatio="none" fill="currentColor"><path d="M19 6.410L17.590 5 12 10.590 6.410 5 5 6.410 10.590 12 5 17.590 6.410 19 12 13.410 17.590 19 19 17.590 13.410 12z"/></svg>
<svg class="ic" style="left:2878.4px;top:1694.2px;width:12.2px;height:19.3px;color:#50535a" viewBox="8.59 6 7.41 12" preserveAspectRatio="none" fill="currentColor"><path d="M10 6L8.590 7.410 13.170 12l-4.580 4.590L10 18l6-6z"/></svg>
</div>
</body>
</html>
